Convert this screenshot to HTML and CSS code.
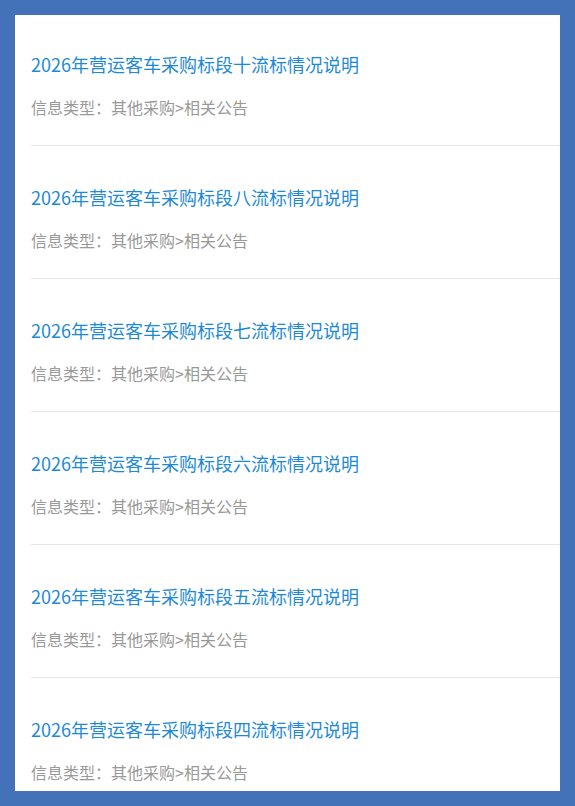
FILE: index.html
```html
<!DOCTYPE html>
<html lang="zh-CN">

<head>
  <meta charset="utf-8">
  <meta name="viewport" content="width=device-width, initial-scale=1.0">
  <title>采购公告</title>
  <link rel="stylesheet" href="styles.css">
</head>

<body>
  <div id="panel">
    <ul class="notice-list">
      <li class="notice">
        <a class="title" href="#">2026年营运客车采购标段十流标情况说明</a>
        <div class="type">信息类型：其他采购&gt;相关公告</div>
      </li>
      <li class="notice">
        <a class="title" href="#">2026年营运客车采购标段八流标情况说明</a>
        <div class="type">信息类型：其他采购&gt;相关公告</div>
      </li>
      <li class="notice">
        <a class="title" href="#">2026年营运客车采购标段七流标情况说明</a>
        <div class="type">信息类型：其他采购&gt;相关公告</div>
      </li>
      <li class="notice">
        <a class="title" href="#">2026年营运客车采购标段六流标情况说明</a>
        <div class="type">信息类型：其他采购&gt;相关公告</div>
      </li>
      <li class="notice">
        <a class="title" href="#">2026年营运客车采购标段五流标情况说明</a>
        <div class="type">信息类型：其他采购&gt;相关公告</div>
      </li>
      <li class="notice">
        <a class="title" href="#">2026年营运客车采购标段四流标情况说明</a>
        <div class="type">信息类型：其他采购&gt;相关公告</div>
      </li>
    </ul>
  </div>
</body>

</html>
```

FILE: styles.css
```css
html,
body {
  margin: 0;
  height: 100%;
}

body {
  box-sizing: border-box;
  padding: 15px;
  background-color: #4472b8;
  font-family: 'Noto Sans CJK SC', 'Noto Sans', sans-serif;
}

#panel {
  height: 100%;
  background-color: #fff;
  overflow: hidden;
}

/* list is scrolled a few pixels up */
.notice-list {
  list-style: none;
  margin: -2px 0 0;
  padding: 0 0 0 16px;
}

.notice {
  display: flex;
  flex-direction: column;
  padding: 37px 0 26px;
  border-bottom: 1px solid #e6e6e6;
}

.title {
  font-size: 18px;
  line-height: 28px;
  color: #1e8ad6;
  text-decoration: none;
  margin-bottom: 17px;
}

.type {
  font-size: 16px;
  line-height: 24px;
  color: #999;
}
```
